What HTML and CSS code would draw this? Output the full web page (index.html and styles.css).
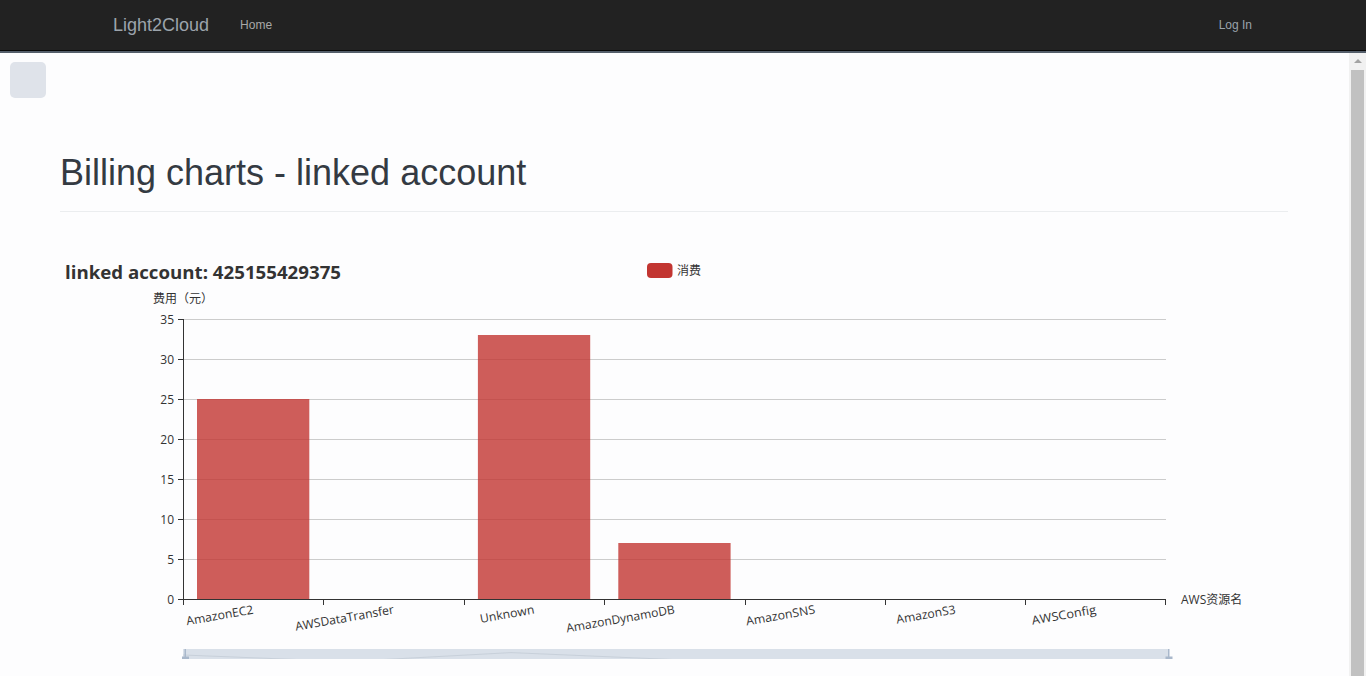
FILE: index.html
```html
<!DOCTYPE html>
<html lang="en">
<head>
<meta charset="utf-8">
<title>Billing charts - linked account</title>
<link rel="stylesheet" href="styles.css">
</head>
<body>
<header class="topbar">
  <nav class="navbar">
    <a class="brand" href="#">Light2Cloud</a>
    <a class="nav-link" href="#">Home</a>
    <a class="nav-link login" href="#">Log In</a>
  </nav>
</header>
<div class="viewport">
  <main class="main">
    <div class="toggle"></div>
    <div class="page">
      <h1 class="page-header">Billing charts - linked account</h1>
      <div class="chart">
        <svg class="chart-svg" width="1228" height="400" viewBox="0 0 1228 400">
          <text class="c-title" x="5" y="20" textLength="276" lengthAdjust="spacingAndGlyphs">linked account: 425155429375</text>
          <rect x="587" y="4" width="25.5" height="15" rx="4" fill="#c23531"/>
          <text class="c-lbl" x="617" y="11.5" dominant-baseline="central">消费</text>
          <text class="c-lbl" x="93" y="39" dominant-baseline="central" textLength="60" lengthAdjust="spacing">费用（元）</text>

          <g stroke="#cccccc" stroke-width="1">
            <line x1="123" y1="60.5" x2="1106" y2="60.5"/>
            <line x1="123" y1="100.5" x2="1106" y2="100.5"/>
            <line x1="123" y1="140.5" x2="1106" y2="140.5"/>
            <line x1="123" y1="180.5" x2="1106" y2="180.5"/>
            <line x1="123" y1="220.5" x2="1106" y2="220.5"/>
            <line x1="123" y1="260.5" x2="1106" y2="260.5"/>
            <line x1="123" y1="300.5" x2="1106" y2="300.5"/>
          </g>

          <g fill="#c23531" fill-opacity="0.8">
            <rect x="137" y="140" width="112.3" height="200"/>
            <rect x="417.9" y="76" width="112.3" height="264"/>
            <rect x="558.3" y="284" width="112.3" height="56"/>
          </g>

          <g stroke="#333333" stroke-width="1">
            <line x1="123.5" y1="60" x2="123.5" y2="341"/>
            <line x1="118" y1="60.5" x2="123" y2="60.5"/>
            <line x1="118" y1="100.5" x2="123" y2="100.5"/>
            <line x1="118" y1="140.5" x2="123" y2="140.5"/>
            <line x1="118" y1="180.5" x2="123" y2="180.5"/>
            <line x1="118" y1="220.5" x2="123" y2="220.5"/>
            <line x1="118" y1="260.5" x2="123" y2="260.5"/>
            <line x1="118" y1="300.5" x2="123" y2="300.5"/>
            <line x1="118" y1="340.5" x2="123" y2="340.5"/>
            <line x1="123" y1="340.5" x2="1106" y2="340.5"/>
            <line x1="123.5" y1="340" x2="123.5" y2="346"/>
            <line x1="263.5" y1="340" x2="263.5" y2="346"/>
            <line x1="404.5" y1="340" x2="404.5" y2="346"/>
            <line x1="544.5" y1="340" x2="544.5" y2="346"/>
            <line x1="685.5" y1="340" x2="685.5" y2="346"/>
            <line x1="825.5" y1="340" x2="825.5" y2="346"/>
            <line x1="965.5" y1="340" x2="965.5" y2="346"/>
            <line x1="1105.5" y1="340" x2="1105.5" y2="346"/>
          </g>

          <g class="c-lbl" text-anchor="end" dominant-baseline="central">
            <text x="114" y="60.5">35</text>
            <text x="114" y="100.5">30</text>
            <text x="114" y="140.5">25</text>
            <text x="114" y="180.5">20</text>
            <text x="114" y="220.5">15</text>
            <text x="114" y="260.5">10</text>
            <text x="114" y="300.5">5</text>
            <text x="114" y="340.5">0</text>
          </g>

          <g class="c-lbl" text-anchor="end" dominant-baseline="central">
            <text transform="translate(193.2 350) rotate(-10)" textLength="68" lengthAdjust="spacingAndGlyphs">AmazonEC2</text>
            <text transform="translate(333.6 350) rotate(-10)" textLength="100" lengthAdjust="spacingAndGlyphs">AWSDataTransfer</text>
            <text transform="translate(474.1 350) rotate(-10)" textLength="55" lengthAdjust="spacingAndGlyphs">Unknown</text>
            <text transform="translate(614.5 350) rotate(-10)" textLength="110" lengthAdjust="spacingAndGlyphs">AmazonDynamoDB</text>
            <text transform="translate(754.9 350) rotate(-10)" textLength="70" lengthAdjust="spacingAndGlyphs">AmazonSNS</text>
            <text transform="translate(895.4 350) rotate(-10)" textLength="60" lengthAdjust="spacingAndGlyphs">AmazonS3</text>
            <text transform="translate(1035.8 350) rotate(-10)" textLength="65" lengthAdjust="spacingAndGlyphs">AWSConfig</text>
          </g>
          <text class="c-lbl" x="1121" y="340.5" dominant-baseline="central">AWS资源名</text>

          <rect x="123" y="390" width="985" height="30" fill="#d9e0e9"/>
          <polyline points="123,396 287,402.5 451,393.6 615,400.6 779,402.5" fill="none" stroke="rgba(47,69,84,0.1)" stroke-width="1"/>
          <g fill="#a9b8cb">
            <rect x="124.5" y="390" width="1.5" height="9"/>
            <rect x="122" y="397.5" width="7" height="2.5"/>
            <rect x="1108" y="390" width="1.5" height="9"/>
            <rect x="1105.5" y="397.5" width="7" height="2.5"/>
          </g>
        </svg>
      </div>
    </div>
  </main>
  <div class="scrollbar" aria-hidden="true">
    <div class="sb-button"><span class="sb-arrow"></span></div>
    <div class="sb-thumb"></div>
  </div>
</div>
</body>
</html>
```

FILE: styles.css
```css
html, body {
  margin: 0;
  padding: 0;
  height: 100%;
}

body {
  overflow: hidden;
  font-family: "Liberation Sans", Arial, sans-serif;
  background: #fdfdfe;
}

.topbar {
  border-bottom: 2px solid #545e6a;
}

.navbar {
  display: flex;
  align-items: center;
  height: 50px;
  padding: 0 114px 0 113px;
  background: #222222;
  border-bottom: 1px solid #080808;
}

.brand {
  font-size: 18px;
  color: #9ca4ac;
  text-decoration: none;
}

.nav-link {
  margin-left: 31px;
  font-size: 12px;
  color: #a8a8a8;
  text-decoration: none;
}

.login {
  margin-left: auto;
  color: #9aa2ab;
}

.viewport {
  display: flex;
  height: 100vh;
}

.main {
  flex: 1;
  min-width: 0;
  overflow: hidden;
  background: #fdfdfe;
}

.scrollbar {
  display: flex;
  flex-direction: column;
  width: 17px;
  flex: 0 0 17px;
  background: #f1f1f1;
}

.sb-button {
  display: flex;
  justify-content: center;
  height: 17px;
  flex: 0 0 17px;
}

.sb-arrow {
  width: 0;
  height: 0;
  margin-top: 6px;
  border-left: 4px solid transparent;
  border-right: 4px solid transparent;
  border-bottom: 4px solid #a3a3a3;
}

.sb-thumb {
  flex: 1;
  margin: 0 2px;
  background: #c1c1c1;
}

.toggle {
  width: 36px;
  height: 36px;
  margin: 9px 0 0 10px;
  border-radius: 5px;
  background: #dfe3ea;
}

.page {
  padding: 0 61px 40px 60px;
}

.page-header {
  margin: 55px 0 0;
  padding-bottom: 18px;
  font-size: 36px;
  line-height: 40px;
  font-weight: 500;
  color: #343a42;
  border-bottom: 1px solid #ebedef;
}

.chart {
  height: 400px;
  margin-top: 47px;
  overflow: hidden;
}

.chart-svg {
  display: block;
}

.c-title {
  font-family: "Open Sans", "Noto Sans CJK SC", sans-serif;
  font-size: 18px;
  font-weight: 700;
  fill: #333333;
}

.c-lbl {
  font-family: "Open Sans", "Noto Sans CJK SC", sans-serif;
  font-size: 12px;
  fill: #333333;
}
```
